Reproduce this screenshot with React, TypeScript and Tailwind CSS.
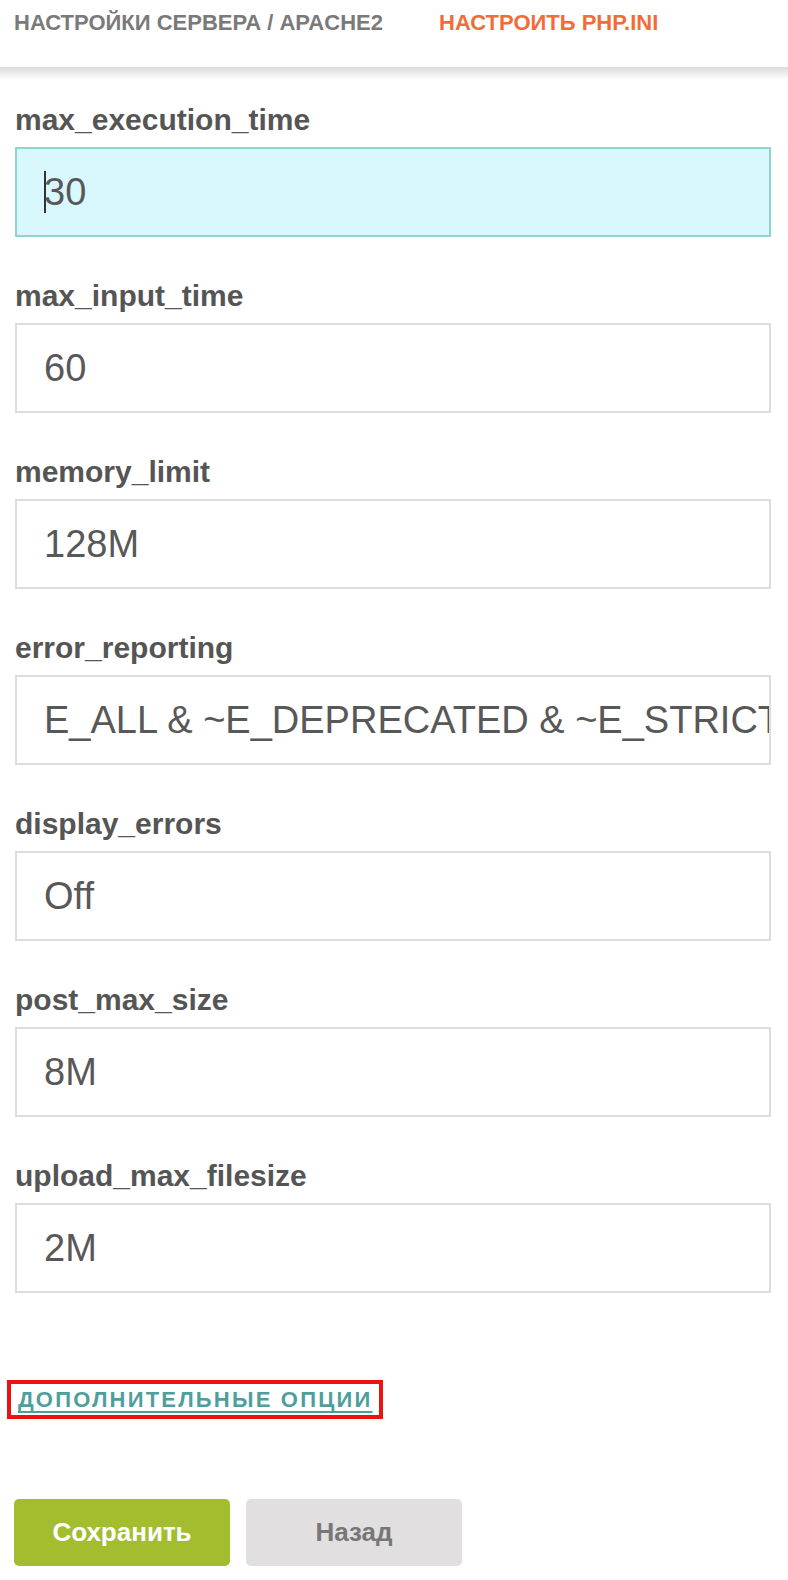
import React from "react";

const fields: { name: string; value: string; active?: boolean }[] = [
  { name: "max_execution_time", value: "30", active: true },
  { name: "max_input_time", value: "60" },
  { name: "memory_limit", value: "128M" },
  { name: "error_reporting", value: "E_ALL & ~E_DEPRECATED & ~E_STRICT" },
  { name: "display_errors", value: "Off" },
  { name: "post_max_size", value: "8M" },
  { name: "upload_max_filesize", value: "2M" },
];

export default function App() {
  return (
    <div className="w-[788px] h-[1580px] bg-white overflow-hidden font-['Liberation_Sans',Arial,sans-serif]">
      <div className="h-[67px]">
        <div className="h-[44px] flex items-center pl-[14px] text-[22px] font-bold">
          <span className="text-[#7a7a7a] w-[425px]">НАСТРОЙКИ СЕРВЕРА / APACHE2</span>
          <span className="text-[#f26c3a]">НАСТРОИТЬ PHP.INI</span>
        </div>
      </div>
      <div className="h-[13px] bg-gradient-to-b from-[#dcdcdc] to-white" />
      <div className="pt-[22px] px-[15px]">
        {fields.map((f) => (
          <div key={f.name} className="mb-[41px] last:mb-0">
            <div className="h-[36px] leading-[36px] text-[30px] font-bold text-[#555555] mb-[9px]">
              {f.name}
            </div>
            <div
              className={
                "h-[90px] w-[756px] border-2 flex items-center pl-[27px] overflow-hidden whitespace-nowrap text-[38px] text-[#585858] " +
                (f.active ? "border-[#8fd6c8] bg-[#d8f8fd]" : "border-[#dcdcdc] bg-white")
              }
            >
              {f.active && <span className="inline-block w-[2px] h-[42px] bg-[#333333] -mr-[2px]" />}
              <span>{f.value}</span>
            </div>
          </div>
        ))}
      </div>
      <div className="pl-[7px] mt-[87px]">
        <div className="inline-block border-4 border-[#ee1111] pl-[7px] pr-[6px] h-[39px] leading-[31px]">
          <span className="text-[22px] font-bold tracking-[2.2px] text-[#4e9f9c] underline decoration-2 underline-offset-[4px]">
            ДОПОЛНИТЕЛЬНЫЕ ОПЦИИ
          </span>
        </div>
      </div>
      <div className="flex gap-[16px] pl-[14px] mt-[80px]">
        <button className="w-[216px] h-[67px] rounded-[5px] bg-[#a2be2f] text-white text-[26px] font-bold">
          Сохранить
        </button>
        <button className="w-[216px] h-[67px] rounded-[5px] bg-[#e1dfdf] text-[#777777] text-[26px] font-bold">
          Назад
        </button>
      </div>
    </div>
  );
}
